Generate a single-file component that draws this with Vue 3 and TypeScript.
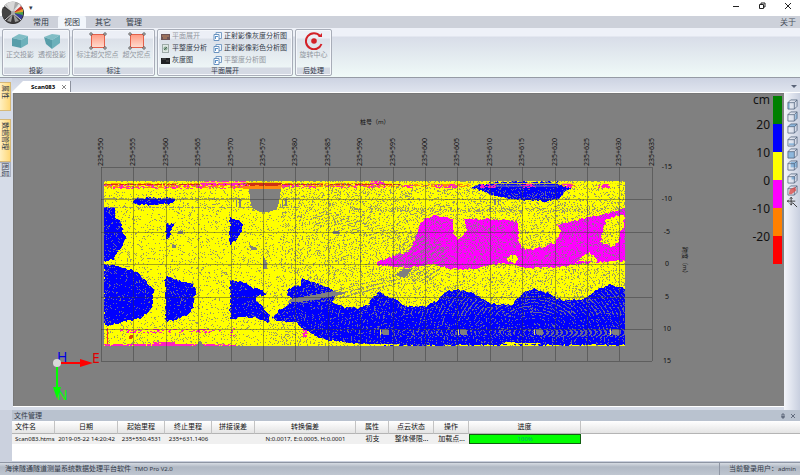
<script setup lang="ts">
import { ref } from 'vue'

type Point = [number, number]
interface Blob { color: string; points: Point[] }
interface Column { title: string; width: number; value: string; left?: boolean }

const menus = ['常用', '视图', '其它', '管理']
const activeMenu = ref('视图')

const unfoldLeft = [
  { label: '平面展开', icon: 'color', off: true },
  { label: '平整度分析', icon: 'flat', off: false },
  { label: '灰度图', icon: 'gray', off: false },
]
const unfoldRight = [
  { label: '正射影像灰度分析图', off: false },
  { label: '正射影像彩色分析图', off: false },
  { label: '平整度分析图', off: true },
]
const sideTabs = [
  { label: '属性', kind: 'short' },
  { label: '数据管理', kind: 'long' },
  { label: '图层', kind: 'plain' },
]
const viewTools = ['左视图', '右视图', '前视图', '后视图', '顶视图', '底视图', '轴测图', '剖切', '平移']
const faces = [
  'M1 4H3V11H1z', 'M9 4L11 2V8L9 10z', 'M1 4L4 1H11L9 4z', 'M2 8H8V10H2z',
  'M1 4H8V11H1z', 'M4 2H11V8H4z', 'M5 4H9V7H5z', '', '',
]

const legend = [
  { color: '#008000', label: '20' },
  { color: '#0000fe', label: '10' },
  { color: '#ffff00', label: '0' },
  { color: '#ff00ff', label: '-10' },
  { color: '#ff8000', label: '-20' },
  { color: '#ff0000', label: '' },
]

const columns: Column[] = [
  { title: '文件名', width: 43, value: 'Scan083.htms', left: true },
  { title: '日期', width: 63, value: '2019-05-22 14:20:42' },
  { title: '起始里程', width: 47, value: '235+550.4531' },
  { title: '终止里程', width: 47, value: '235+631.1406' },
  { title: '拼接误差', width: 43, value: '' },
  { title: '转换偏差', width: 101, value: 'N:0.0017, E:0.0005, H:0.0001' },
  { title: '属性', width: 33, value: '初支' },
  { title: '点云状态', width: 45, value: '整体侵限...' },
  { title: '操作', width: 35, value: '加载点...' },
]
const progress = ref(100)

// Grid of the unrolled tunnel surface
const left = 101
const top = 167
const step = 32.4
const stations = Array.from({ length: 18 }, (_, i) => ({ x: Math.round(left + i * step), label: `235+${550 + i * 5}` }))
const spans = Array.from({ length: 7 }, (_, i) => ({ y: Math.round(top + i * step), label: String(-15 + i * 5) }))

function makeRandom(start: number) {
  let s = start
  return () => {
    s = (s * 1664525 + 1013904223) % 4294967296
    return s / 4294967296
  }
}
const random = makeRandom(83)

// Breaks every edge into short pieces and shifts them, as scan points do
function rough(points: Point[]): string {
  const out: string[] = []
  points.forEach(([x1, y1], i) => {
    const [x2, y2] = points[(i + 1) % points.length]
    const n = Math.max(1, Math.round(Math.hypot(x2 - x1, y2 - y1) / 2))
    for (let k = 0; k < n; k++) {
      const x = Math.round(x1 + ((x2 - x1) * k) / n + random() * 2 - 1)
      const y = Math.round(y1 + ((y2 - y1) * k) / n + random() * 2 - 1)
      out.push(`${Math.max(104, Math.min(625, x))},${Math.max(181, Math.min(346, y))}`)
    }
  })
  return out.join(' ')
}

const blue = '#0000fe'
const magenta = '#ff00ff'
const yellow = '#ffff00'
const blobs: Blob[] = [
  { color: blue, points: [[132, 201], [138, 198], [172, 198], [176, 201], [170, 204], [140, 205], [133, 203]] },
  { color: blue, points: [[104, 207], [114, 207], [115, 218], [121, 221], [122, 233], [126, 237], [122, 248], [116, 252], [113, 259], [104, 262]] },
  { color: blue, points: [[104, 264], [120, 267], [133, 271], [143, 277], [150, 287], [154, 288], [152, 303], [153, 307], [147, 314], [138, 319], [122, 322], [104, 326]] },
  { color: blue, points: [[166, 224], [174, 224], [172, 229], [170, 235], [166, 240]] },
  { color: blue, points: [[165, 276], [178, 280], [190, 283], [197, 290], [194, 297], [194, 307], [188, 315], [178, 319], [165, 321]] },
  { color: blue, points: [[230, 217], [238, 221], [243, 224], [242, 232], [235, 241], [230, 244]] },
  { color: blue, points: [[230, 280], [245, 283], [255, 289], [261, 289], [266, 294], [256, 298], [259, 305], [264, 308], [269, 315], [268, 323], [258, 319], [250, 317], [230, 318]] },
  { color: blue, points: [[271, 318], [280, 310], [291, 302], [294, 300], [288, 296], [287, 289], [300, 285], [302, 278], [318, 284], [328, 287], [336, 292], [332, 302], [345, 307], [358, 308], [369, 305], [373, 296], [380, 291], [389, 297], [397, 300], [404, 306], [425, 306], [438, 300], [445, 292], [457, 289], [472, 293], [483, 299], [492, 304], [510, 305], [520, 298], [526, 291], [533, 289], [548, 293], [560, 300], [580, 300], [590, 295], [598, 289], [610, 285], [625, 288], [626, 345], [500, 345], [400, 346], [365, 344], [345, 343], [320, 338], [305, 330], [295, 322], [280, 321]] },
  { color: magenta, points: [[375, 263], [388, 258], [400, 254], [409, 252], [415, 240], [419, 226], [424, 219], [436, 215], [452, 219], [454, 235], [458, 239], [467, 232], [464, 219], [478, 219], [498, 219], [518, 222], [518, 240], [521, 249], [535, 249], [555, 243], [561, 231], [557, 225], [580, 219], [603, 215], [620, 210], [626, 208], [626, 261], [600, 262], [575, 264], [560, 267], [530, 268], [515, 265], [500, 263], [475, 269], [450, 269], [435, 264], [410, 267], [378, 266]] },
  { color: yellow, points: [[607, 219], [602, 233], [600, 243], [613, 247], [619, 240], [621, 232], [624, 228], [624, 215], [612, 217]] },
  { color: yellow, points: [[507, 261], [509, 257], [513, 255], [518, 258], [515, 263]] },
  { color: yellow, points: [[576, 261], [583, 256], [590, 252], [594, 256], [598, 263]] },
  { color: blue, points: [[471, 187], [489, 183], [490, 182], [559, 182], [559, 185], [571, 188], [563, 193], [559, 199], [545, 201], [520, 200], [495, 196], [484, 192]] },
]
const shapes = blobs.map((b) => ({ color: b.color, points: rough(b.points) }))

const lowerEdge: Point[] = [[287, 306], [335, 300], [372, 305], [390, 300], [405, 308], [430, 308], [457, 291], [490, 305], [515, 303], [533, 291], [560, 302], [585, 300], [610, 287], [626, 290]]
function bankTop(x: number): number {
  for (let i = 1; i < lowerEdge.length; i++) {
    const [x2, y2] = lowerEdge[i]
    const [x1, y1] = lowerEdge[i - 1]
    if (x <= x2) return y1 + ((y2 - y1) * (x - x1)) / (x2 - x1)
  }
  return 290
}

// Gaps between scan points: fine speckle, denser swirls and arcs around each scanner station
function gapChance(x: number, y: number): number {
  if (y === 181 || y === 346) return 0.35
  if (y === 198 || y === 207) return x < 300 ? 0.65 : 0.25
  if (x > 300 && y > bankTop(x)) {
    if (y > 328 && y < 337 && x > 390) {
      const bend = (y - 332) * (y - 332) * 0.25
      const wave = Math.sin((x + (x > 540 ? bend : -bend)) * 1.3)
      return wave > 0.1 ? (x > 540 ? 0.95 : 0.6) : 0.06
    }
    const ripple = Math.sin(Math.hypot(x - 533, (y - 340) * 1.2) * 1.7)
    return ripple > 0.4 ? (x > 400 && y < 315 ? 0.6 : 0.3) : 0.05
  }
  if (y > 207 && y < 212 && x > 350) return 0.4
  const swirl = Math.hypot((x - 420) / 26, (y - 258) / 24)
  if (swirl < 1) return Math.sin(x * 0.9 + y * 1.3) > 0.1 ? 0.6 : 0.2
  const trail = Math.abs(y - (205 + (x - 270) * 0.25))
  if (x > 310 && x < 420 && trail < 8) return Math.sin(x * 0.55 + y * 1.9) > 0.3 ? 0.55 : 0.12
  const fan = Math.abs(y - (300 - (x - 315) * 0.27))
  if (x > 300 && x < 400 && fan < 6) return Math.sin(x * 0.4 + y * 1.6) > 0.2 ? 0.6 : 0.15
  if (x > 280) return Math.sin(Math.hypot(x - 455, y - 262) * 2) > 0.5 ? 0.33 : 0.12
  return 0.1
}
function speckle(): string {
  const parts: string[] = []
  for (let y = 181; y <= 346; y++) {
    for (let x = 104; x < 626; x++) {
      if (random() < gapChance(x, y)) parts.push(`M${x} ${y}h1v1h-1z`)
    }
  }
  return parts.join('')
}
function scatter(x1: number, x2: number, y1: number, y2: number, chance: number): string {
  const parts: string[] = []
  for (let y = y1; y < y2; y++) {
    for (let x = x1; x < x2; x++) {
      if (random() < chance) parts.push(`M${x} ${y}h2v1h-2z`)
    }
  }
  return parts.join('')
}
const gaps = speckle()
const orangeDots = scatter(104, 470, 183, 187, 0.35) + scatter(104, 280, 187, 188, 0.4) + scatter(555, 575, 183, 187, 0.3)
const redDots = scatter(104, 400, 184, 185, 0.55) + scatter(243, 281, 182, 187, 0.5)
const pinkDots =
  scatter(200, 245, 181, 185, 0.45) + scatter(104, 250, 185, 189, 0.16) + scatter(281, 385, 185, 188, 0.14) +
  scatter(370, 384, 181, 184, 0.4) + scatter(402, 412, 185, 188, 0.4) + scatter(435, 456, 184, 188, 0.3) +
  scatter(480, 495, 184, 188, 0.4) + scatter(519, 534, 183, 188, 0.4) + scatter(560, 572, 183, 188, 0.3) +
  scatter(598, 609, 184, 188, 0.35) + scatter(104, 235, 344, 346, 0.6) + scatter(152, 176, 342, 346, 0.6) +
  scatter(120, 224, 329, 333, 0.15) + scatter(230, 234, 328, 336, 0.3) + scatter(302, 307, 328, 337, 0.3)
const notches = [380, 458, 534, 610]
</script>

<template>
  <div class="app">
    <header class="title-bar">
      <svg class="logo" viewBox="0 0 24 24" aria-hidden="true">
        <circle cx="12" cy="12" r="11" fill="#2c2a2b" />
        <path d="M12 12L3 5A11 11 0 0 1 20 4z" fill="#aaa" />
        <path d="M12 12L5 3A11 11 0 0 1 14 1z" fill="#d8d8d8" />
        <path d="M12 12L18 3L21 6z" fill="#eee" />
        <path d="M12 12L20 5L22 9z" fill="#cf3428" />
        <path d="M12 12L22 8V12z" fill="#e5a12c" />
        <path d="M12 12L22 11L22 15z" fill="#49a148" />
        <path d="M12 12L22 14L20 19z" fill="#383f9c" />
        <path d="M12 12L2 6A12 12 0 0 0 3 18z" fill="#444" />
        <path d="M12 12L4 19A11 11 0 0 0 20 19z" fill="#3a3839" />
        <path d="M12 12L6 20L10 21zM12 12L14 21L18 20z" fill="#999" />
        <path d="M4 4L12 11L18 3M4 19L12 12L20 19" fill="none" stroke="#ddd" />
        <circle cx="12" cy="12" r="2" fill="#aaa" />
      </svg>
      <span class="quick">▾</span>
      <div class="window-buttons">
        <button type="button" aria-label="最小化"><svg viewBox="0 0 8 8"><path d="M1 4.5H7" /></svg></button>
        <button type="button" aria-label="还原"><svg viewBox="0 0 8 8"><path d="M1.5 2.5H5.5V6.5H1.5zM3 2.500V1H7V5H5.500" /></svg></button>
        <button type="button" aria-label="关闭"><svg viewBox="0 0 8 8"><path d="M1 1L7 7M7 1L1 7" /></svg></button>
      </div>
    </header>

    <nav class="menu">
      <button v-for="m in menus" :key="m" type="button" :class="{ active: m === activeMenu }" @click="activeMenu = m">{{ m }}</button>
      <a class="about" href="#about">关于</a>
    </nav>

    <section class="ribbon">
      <div class="group projection">
        <div class="big-row">
          <button class="big off" type="button">
            <svg viewBox="0 0 18 18"><path d="M1 6L8 2L17 4L10 8z" fill="#80bdc5" /><path d="M1 6L10 8V16L1 14z" fill="#579da9" /><path d="M10 8L17 4V12L10 16z" fill="#6cb0ba" /></svg>
            正交投影
          </button>
          <button class="big off" type="button">
            <svg viewBox="0 0 18 18"><path d="M1 5L9 2L17 3L9 8z" fill="#80bdc5" /><path d="M1 5L9 8V17L3 12z" fill="#579da9" /><path d="M9 8L17 3V11L9 17z" fill="#6cb0ba" /></svg>
            透视投影
          </button>
        </div>
        <div class="caption">投影</div>
      </div>
      <div class="group marking">
        <div class="big-row">
          <button v-for="t in ['标注超欠挖点', '超欠挖点']" :key="t" class="big off" type="button">
            <svg viewBox="0 0 18 18">
              <defs><linearGradient id="mark" x2="0" y2="1"><stop stop-color="#ff9b83" /><stop offset="1" stop-color="#ffdccf" /></linearGradient></defs>
              <rect x="2.500" y="2.500" width="13" height="13" fill="url(#mark)" stroke="#e4604a" />
              <g fill="#fff" stroke="#333" stroke-width=".8"><circle cx="2" cy="2" r="1.200" /><circle cx="16" cy="2" r="1.200" /><circle cx="2" cy="16" r="1.200" /><circle cx="16" cy="16" r="1.200" /></g>
            </svg>
            {{ t }}
          </button>
        </div>
        <div class="caption">标注</div>
      </div>
      <div class="group unfold">
        <div class="lists">
          <div class="list">
            <button v-for="i in unfoldLeft" :key="i.label" type="button" :class="{ off: i.off }">
              <svg viewBox="0 0 9 9">
                <template v-if="i.icon === 'color'"><rect y="2" width="9" height="6" fill="#6d5558" /><path d="M1 4H8M2 6H6" stroke="#c88e62" /></template>
                <template v-else-if="i.icon === 'flat'"><rect x="1.500" y=".5" width="6" height="8" fill="#dfe8e4" stroke="#9eaaa8" /><circle cx="4.500" cy="4.500" r="2" fill="#8cae98" /><path d="M3 6L6 3" stroke="#55675c" /></template>
                <template v-else><rect y="2" width="9" height="6" fill="#1f2023" /><path d="M1 3H5M5 5H8" stroke="#565656" /></template>
              </svg>
              {{ i.label }}
            </button>
          </div>
          <div class="list">
            <button v-for="i in unfoldRight" :key="i.label" type="button" :class="{ off: i.off }">
              <svg viewBox="0 0 9 9"><path d="M3 .5H8.500V6.500H3z" fill="#eef4fb" stroke="#7b9fc6" /><path d="M1 2.500H6V8.500H1z" fill="#fff" stroke="#6a92bf" /><path d="M2 4.500H5M2.500 5V7" stroke="#5b91c7" /></svg>
              {{ i.label }}
            </button>
          </div>
        </div>
        <div class="caption">平面展开</div>
      </div>
      <div class="group post">
        <div class="big-row">
          <button class="big off" type="button">
            <svg viewBox="0 0 18 18"><g fill="none" stroke="#d32128" stroke-width="2"><path d="M15 4A8 8 0 1 0 16.500 12" /></g><path d="M13 5H17V1z" fill="#d32128" /><circle cx="9" cy="9" r="2.800" fill="#d32128" /></svg>
            旋转中心
          </button>
        </div>
        <div class="caption">后处理</div>
      </div>
    </section>

    <main class="workspace">
      <aside class="side">
        <button v-for="s in sideTabs" :key="s.label" type="button" :class="s.kind"><span>{{ s.label }}</span></button>
      </aside>
      <div class="documents">
        <div class="doc-strip">
          <div class="doc-tab"><b>Scan083</b><button type="button" aria-label="关闭文档"><svg viewBox="0 0 6 6"><path d="M1 1L5 5M5 1L1 5" /></svg></button></div>
          <span class="more" aria-hidden="true"></span>
        </div>
        <div class="view-row">
          <div class="viewport">
            <svg class="scene" viewBox="14 94 770 312" preserveAspectRatio="xMinYMin meet" role="img" aria-label="桩号 跨度">
              <g shape-rendering="crispEdges">
                <rect x="104" y="181" width="521" height="165" fill="#ffff00" />
                <path :d="orangeDots" fill="#ff8a10" />
                <path :d="redDots" fill="#d82c10" />
                <polygon v-for="(s, i) in shapes" :key="i" :points="s.points" :fill="s.color" />
                <path d="M365 345H400V344H365zM500 344H540V343H515V342H505V343z" fill="#ffff00" />
                <path :d="gaps" fill="#808080" fill-opacity=".8" />
                <path d="M490 185H558V187H490z" fill="#8080a0" fill-opacity=".5" />
                <path :d="pinkDots" fill="#ff20c0" />
                <path d="M104 182H375V183H104zM385 183H625V184H385zM104 189H249V190H104z" fill="#ffff00" fill-opacity=".7" />
                <path d="M249 183H281V185H249z" fill="#c83218" />
                <path d="M243 186H281V189H243z" fill="#ff8a10" />
                <path d="M249 189H281L279 202L277 209L268 212H260L252 208L250 198z" fill="#808080" />
                <path d="M236 200h1v7h-1zM239 199h2v8h-2zM282 200h1v7h-1zM285 199h2v7h-2zM494 199h2v6h-2zM498 199h1v6h-1z" fill="#808080" />
                <path d="M107 328V344" stroke="#ff3020" />
                <circle cx="131" cy="337" r="2" fill="#d84a10" />
                <g v-for="n in notches" :key="n">
                  <path :d="`M${n + 2} 329h5l2 2v4h-6l-1 -2z`" fill="#808080" />
                  <path :d="`M${n} 329h1v6h-1z`" fill="#e8e070" />
                </g>
                <path d="M200 340L204 346H196zM178 231h5v3h-5zM172 245h4v3h-4zM250 245l7 3v2h-6zM263 255l4 8v6h-4zM290 299L330 292H345V294L318 299L300 302H290zM333 231h6v3h-6zM395 275l9-6h8l-7 9z" fill="#808080" />
              </g>
              <g class="grid-lines" shape-rendering="crispEdges">
                <path v-for="s in stations" :key="s.label" :d="`M${s.x} ${top}V361`" />
                <path v-for="s in spans" :key="s.label" :d="`M101 ${s.y}H652`" />
              </g>
              <g class="axis">
                <text v-for="s in stations" :key="s.label" :transform="`translate(${s.x + 2} 166) rotate(-90)`">{{ s.label }}</text>
                <text v-for="s in spans" :key="s.label" x="667" :y="s.y + 2" text-anchor="middle">{{ s.label }}</text>
                <text class="axis-name" x="360" y="124">桩号（m）</text>
                <text class="axis-name" transform="translate(683 247) rotate(90)">跨度（m）</text>
              </g>
              <g class="compass">
                <path d="M57 363H80" stroke="#f00" stroke-width="2" /><path d="M80 359L93 363L80 367z" fill="#f00" />
                <path d="M57 363V388" stroke="#0f0" stroke-width="2" /><path d="M53 387H61L57 399z" fill="#0f0" />
                <text x="57" y="362" fill="#0000e0">H</text>
                <text x="92" y="363" fill="#e00000">E</text>
                <text x="57" y="400" fill="#00ff00">N</text>
                <circle cx="57" cy="363" r="4" fill="#d8d8d8" />
              </g>
            </svg>
            <div class="legend">
              <div class="legend-labels"><span class="unit">cm</span><span v-for="l in legend.slice(0, 5)" :key="l.label">{{ l.label }}</span></div>
              <div class="legend-bar"><i v-for="l in legend" :key="l.color" :style="{ background: l.color }"></i></div>
            </div>
          </div>
          <div class="tools">
            <button v-for="(t, i) in viewTools" :key="t" type="button" :aria-label="t">
              <svg viewBox="0 0 12 12">
                <template v-if="i < 8">
                  <path v-if="i < 7" :d="faces[i]" fill="#8db7dc" />
                  <path class="cube" d="M1 4H8V11H1zM1 4L4 1H11L8 4M11 1V8L8 11" />
                  <path v-if="i === 7" d="M2 10L3 5L9 2L10 6L5 10z" fill="#dc4c4a" fill-opacity=".8" />
                </template>
                <path v-else class="cross" d="M4.500 0V9M0 4.500H9M3 2L4.500 .5L6 2M2 3L.5 4.500L2 6M3 7L4.500 8.500L6 7M6 6L11 11" />
              </svg>
            </button>
          </div>
        </div>
      </div>
    </main>

    <section class="files">
      <div class="files-title">
        <span>文件管理</span>
        <button type="button" aria-label="固定"><svg viewBox="0 0 6 6"><path d="M2 1H4V4H2zM1 4H5M3 4V6" /></svg></button>
        <button type="button" aria-label="关闭"><svg viewBox="0 0 6 6"><path d="M1 1L5 5M5 1L1 5" /></svg></button>
      </div>
      <table>
        <colgroup>
          <col v-for="c in columns" :key="c.title" :style="{ width: c.width + 'px' }" />
          <col class="progress-col" />
          <col />
        </colgroup>
        <thead>
          <tr>
            <th v-for="c in columns" :key="c.title" :class="{ start: c.left }">{{ c.title }}</th>
            <th>进度</th>
            <th></th>
          </tr>
        </thead>
        <tbody>
          <tr>
            <td v-for="c in columns" :key="c.title" :class="{ start: c.left, han: /[^\x00-\x7f]/.test(c.value) }">{{ c.value }}</td>
            <td class="meter"><div role="progressbar" :aria-valuenow="progress" :style="{ width: progress + '%' }">{{ progress }}%</div></td>
            <td class="rest"></td>
          </tr>
        </tbody>
      </table>
    </section>

    <footer class="status">
      <span>海徕隧通隧道测量系统数据处理平台软件&ensp;<span class="latin">TMO Pro V2.0</span></span>
      <span class="user">当前登录用户：<span class="latin">admin</span></span>
    </footer>
  </div>
</template>

<style>
body { margin: 0; background: #cbd1de; }
</style>

<style scoped>
.app { display: flex; flex-direction: column; height: 100vh; overflow: hidden; font: 7px/10px "Noto Sans", "Noto Sans CJK SC", sans-serif; color: #333a48; background: #cbd1de; }
button { padding: 0; border: 0; background: none; font: inherit; color: inherit; white-space: nowrap; }
svg { display: block; }

.title-bar { position: relative; flex: none; display: flex; align-items: center; height: 16px; background: #fff; }
.logo { position: absolute; z-index: 2; left: 1px; top: 1px; width: 24px; height: 24px; }
.quick { padding-left: 29px; }
.window-buttons { display: flex; gap: 18px; margin-left: auto; padding: 0 8px 4px 0; }
.window-buttons svg { width: 8px; height: 8px; fill: none; stroke: #222; }

.menu { flex: none; display: flex; height: 12px; padding-left: 27px; background: #cdd1da; font-size: 8px; line-height: 12px; }
.menu button { width: 28px; margin-right: 3px; }
.menu .active { border-radius: 2px 2px 0 0; background: #f2f6fb; }
.about { margin-left: auto; padding-right: 4px; color: #4c5361; text-decoration: none; }

.ribbon { flex: none; display: flex; gap: 2px; box-sizing: border-box; height: 50px; padding: 1px 2px; border-bottom: 1px solid #969ba5; background: linear-gradient(#eef1f8 0 8px, #d8dde8 9px, #f0faf8); }
.group { display: flex; flex-direction: column; box-sizing: border-box; border: 1px solid #a8adb8; border-radius: 2px; box-shadow: inset 0 0 0 1px #f5f7fb; background: linear-gradient(#eceff6 0 8px, #dbe0e9 9px, #edf5f6 37px, #d4d9e3 38px); }
.projection { width: 68px; }
.marking { width: 83px; }
.unfold { width: 136px; }
.post { width: 37px; }
.caption { height: 9px; text-align: center; }
.big-row { flex: 1; display: flex; justify-content: center; gap: 4px; }
.big { display: flex; flex-direction: column; align-items: center; justify-content: flex-start; padding-top: 2px; }
.big svg { width: 18px; height: 18px; }
.off { color: #9297a0; }
.lists { flex: 1; display: flex; gap: 6px; padding: 0 3px; }
.list { display: flex; flex-direction: column; }
.list button { display: flex; align-items: center; gap: 2px; height: 12px; }
.list svg { width: 9px; height: 9px; }

.workspace { flex: 1; display: flex; min-height: 0; background: #d6dce8; }
.side { flex: none; display: flex; flex-direction: column; width: 12px; padding-top: 4px; }
.side button { display: flex; justify-content: center; align-items: flex-start; box-sizing: border-box; width: 11px; padding-top: 2px; border: 1px solid #d6b878; border-left: 0; background: linear-gradient(90deg, #fff0c2, #ffd878); line-height: 9px; }
.side span { writing-mode: vertical-rl; text-orientation: sideways; }
.side .short { height: 29px; margin-bottom: 8px; }
.side .long { height: 43px; }
.side .plain { height: 15px; border-color: #aab0bf; background: #d6dce8; padding-top: 0; }
.documents { flex: 1; display: flex; flex-direction: column; min-width: 0; }
.doc-strip { flex: none; display: flex; justify-content: space-between; align-items: flex-end; height: 14px; border-bottom: 1px solid #fff; background: linear-gradient(#cdd3e2, #dfe4ee); }
.doc-tab { display: flex; align-items: center; gap: 6px; box-sizing: border-box; height: 11px; padding: 0 3px 0 19px; border-right: 1px solid #8d929e; background: #fff; color: #000; font-size: 6px; clip-path: polygon(11px 0, 100% 0, 100% 100%, 0 100%); }
.doc-tab svg { width: 6px; height: 6px; fill: none; stroke: #555; stroke-width: .7; }
.more { margin: 0 3px 4px 0; border: 3px solid transparent; border-top-color: #5b6478; border-bottom: 0; }
.view-row { flex: 1; display: flex; min-height: 0; }
.viewport { flex: 1; display: flex; position: relative; min-width: 0; margin: 0 0 4px 1px; border: 1px solid #777; border-width: 1px 0 0 1px; background: #808080; box-shadow: 0 1px #fff; }
.scene { flex: 1; width: 100%; height: 100%; min-width: 0; }
.grid-lines { fill: none; stroke: #303030; stroke-opacity: .42; }
.axis { font-size: 7px; fill: #111; }
.axis-name { font-size: 6px; }
.compass { font-size: 14px; }
.legend { position: absolute; top: 2px; right: 2px; display: flex; gap: 3px; color: #111; font-size: 12px; }
.legend-labels { display: flex; flex-direction: column; align-items: flex-end; }
.legend-labels span { height: 28px; line-height: 28px; }
.legend-labels .unit { height: 15px; line-height: 8px; }
.legend-bar i { display: block; width: 9px; height: 28px; }
.tools { flex: none; display: flex; flex-direction: column; width: 16px; padding-top: 6px; background: linear-gradient(90deg, #f4f6fb, #c8cfdf); }
.tools button { display: flex; justify-content: center; height: 12px; }
.tools button:nth-child(3n) { margin-bottom: 1px; }
.tools svg { width: 11px; height: 11px; }
.cube { fill: none; stroke: #4e6078; stroke-width: .8; }
.cross { fill: none; stroke: #333; }

.files { flex: none; height: 51px; margin: 0 0 1px 12px; background: #fff; }
.files-title { display: flex; align-items: center; gap: 4px; height: 11px; padding: 0 4px 0 2px; background: #b9c2cf; }
.files-title span { margin-right: auto; }
.files-title svg { width: 6px; height: 6px; fill: none; stroke: #4c566a; stroke-width: .8; }
table { width: 100%; table-layout: fixed; border-collapse: separate; border-spacing: 0; color: #111; }
.progress-col { width: 112px; }
th { box-sizing: border-box; height: 13px; padding: 0; border-right: 1px solid #c3c3c3; border-bottom: 1px solid #b4b4b4; background: linear-gradient(#fff, #e4e4e4); font-size: 7px; font-weight: 400; line-height: 12px; }
th:last-child { border-right: 0; }
td { box-sizing: border-box; height: 10px; padding: 0; background: #f0f0f0; text-align: center; font-size: 6px; line-height: 10px; white-space: nowrap; }
.start { padding-left: 3px; text-align: left; }
.han { font-size: 7px; }
.meter div { box-sizing: border-box; height: 10px; border: 1px solid #106010; background: #00ff00; color: #00a878; line-height: 8px; }
.rest { background: #fff; }

.status { flex: none; display: flex; justify-content: space-between; box-sizing: border-box; height: 13px; padding-left: 5px; border-top: 1px solid #8e95a3; background: linear-gradient(#d6dbe3, #b1b9c5 4px, #bfc6d0); line-height: 12px; }
.latin { font-size: 6px; }
.user { padding: 0 4px 0 9px; border-left: 1px solid #8f96a4; }
</style>
